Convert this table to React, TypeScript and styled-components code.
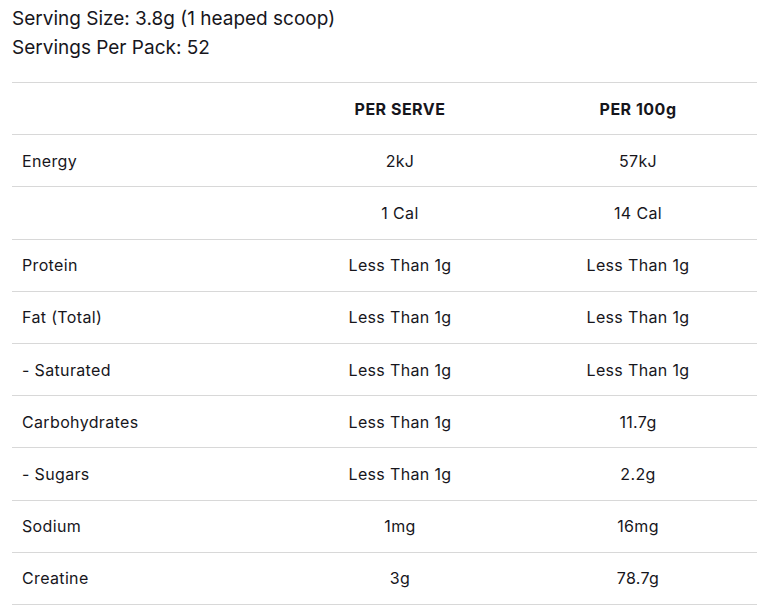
import React from 'react';
import styled, { createGlobalStyle } from 'styled-components';

const GlobalStyle = createGlobalStyle`
  body {
    margin: 0;
    background: #ffffff;
    color: #17161c;
    font-family: Inter, Lato, Arial, sans-serif;
  }
`;

const Panel = styled.div`
  padding: 4px 1px 0 12px;
`;

const ServingInfo = styled.p`
  margin: 0 0 20px 0;
  font-size: 19px;
  line-height: 29px;
`;

const Table = styled.table`
  width: 745px;
  border-collapse: collapse;
  font-size: 16px;
  letter-spacing: 0.35px;
  border-top: 1px solid #d8d8d8;
`;

const Row = styled.tr`
  height: 52.2px;
  border-bottom: 1px solid #d8d8d8;
`;

const HeadCell = styled.th`
  font-weight: 700;
  font-size: 16px;
  letter-spacing: 0.5px;
  text-align: center;
  width: 238px;
  padding: 0;
`;

const Cell = styled.td<{ $label?: boolean }>`
  padding: 0 ${(p) => (p.$label ? '10px' : '0')};
  text-align: ${(p) => (p.$label ? 'left' : 'center')};
`;

const rows: [string, string, string][] = [
  ['Energy', '2kJ', '57kJ'],
  ['', '1 Cal', '14 Cal'],
  ['Protein', 'Less Than 1g', 'Less Than 1g'],
  ['Fat (Total)', 'Less Than 1g', 'Less Than 1g'],
  ['- Saturated', 'Less Than 1g', 'Less Than 1g'],
  ['Carbohydrates', 'Less Than 1g', '11.7g'],
  ['- Sugars', 'Less Than 1g', '2.2g'],
  ['Sodium', '1mg', '16mg'],
  ['Creatine', '3g', '78.7g'],
];

export default function App() {
  return (
    <>
      <GlobalStyle />
      <Panel>
        <ServingInfo>
          Serving Size: 3.8g (1 heaped scoop)
          <br />
          Servings Per Pack: 52
        </ServingInfo>
        <Table>
          <thead>
            <Row>
              <th />
              <HeadCell>PER SERVE</HeadCell>
              <HeadCell>PER 100g</HeadCell>
            </Row>
          </thead>
          <tbody>
            {rows.map(([label, serve, hundred], i) => (
              <Row key={i}>
                <Cell $label>{label}</Cell>
                <Cell>{serve}</Cell>
                <Cell>{hundred}</Cell>
              </Row>
            ))}
          </tbody>
        </Table>
      </Panel>
    </>
  );
}
